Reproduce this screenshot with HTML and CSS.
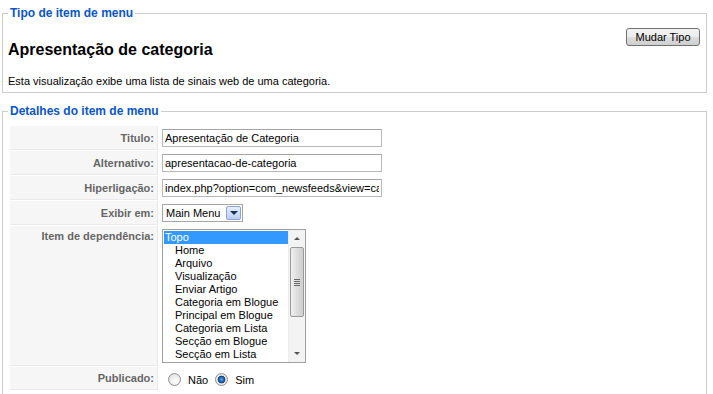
FILE: index.html
```html
<!DOCTYPE html>
<html>

<head>
    <title>Editar item de menu</title>
    <link rel="stylesheet" href="styles.css">
</head>

<body>
    <!-- tipo do item -->
    <fieldset class="box">
        <legend>Tipo de item de menu</legend>
        <button class="btn" type="button">Mudar Tipo</button>
        <h2 class="type-title">Apresentação de categoria</h2>
        <p class="type-desc">Esta visualização exibe uma lista de sinais web de uma categoria.</p>
    </fieldset>

    <!-- detalhes -->
    <fieldset class="box details">
        <legend>Detalhes do item de menu</legend>
        <table class="admintable">
            <tr>
                <td class="key">Titulo:</td>
                <td><input class="field" type="text" value="Apresentação de Categoria"></td>
            </tr>
            <tr>
                <td class="key">Alternativo:</td>
                <td><input class="field" type="text" value="apresentacao-de-categoria"></td>
            </tr>
            <tr>
                <td class="key">Hiperligação:</td>
                <td><input class="field" type="text" value="index.php?option=com_newsfeeds&amp;view=category"></td>
            </tr>
            <tr>
                <td class="key">Exibir em:</td>
                <td>
                    <div class="combo">
                        <span class="combo-text">Main Menu</span>
                        <span class="combo-btn"><span class="tri-down"></span></span>
                    </div>
                </td>
            </tr>
            <tr>
                <td class="key top">Item de dependência:</td>
                <td>
                    <div class="listbox">
                        <ul class="list-items">
                            <li class="selected">Topo</li>
                            <li class="sub">Home</li>
                            <li class="sub">Arquivo</li>
                            <li class="sub">Visualização</li>
                            <li class="sub">Enviar Artigo</li>
                            <li class="sub">Categoria em Blogue</li>
                            <li class="sub">Principal em Blogue</li>
                            <li class="sub">Categoria em Lista</li>
                            <li class="sub">Secção em Blogue</li>
                            <li class="sub">Secção em Lista</li>
                        </ul>
                        <div class="scrollbar">
                            <span class="arrow"><span class="tri-up"></span></span>
                            <span class="thumb"><span class="grip"></span></span>
                            <span class="track"></span>
                            <span class="arrow"><span class="tri-down small"></span></span>
                        </div>
                    </div>
                </td>
            </tr>
            <tr>
                <td class="key">Publicado:</td>
                <td>
                    <div class="radios">
                        <label class="radio"><span class="dot"></span>Não</label>
                        <label class="radio"><span class="dot checked"></span>Sim</label>
                    </div>
                </td>
            </tr>
        </table>
    </fieldset>
</body>

</html>
```

FILE: styles.css
```css
body {
    margin: 0;
    padding: 6px 6px 0 2px;
    font-family: "Liberation Sans", Arial, sans-serif;
    font-size: 11px;
    color: #000;
    background-color: #ffffff;
}

/* caixas */
.box {
    margin: 0;
    padding: 0 6px 4px 5px;
    border: 1px solid #cccccc;
    min-width: 0;
}

.box legend {
    padding: 0 2px;
    font-size: 12px;
    line-height: 14px;
    font-weight: bold;
    color: #0b55c4;
}

.details {
    margin-top: 11px;
    padding: 0 6px 10px 6px;
}

.details legend {
    margin-left: -1px;
}

.btn {
    float: right;
    margin-top: 8px;
    width: 74px;
    height: 18px;
    padding: 0;
    font-family: "Liberation Sans", Arial, sans-serif;
    font-size: 11px;
    color: #000;
    border: 1px solid #707070;
    border-radius: 3px;
    background: linear-gradient(#f4f4f4 0%, #ebebeb 50%, #dddddd 51%, #cfcfcf 100%);
}

.type-title {
    margin: 20px 0 0 0;
    font-size: 16px;
    line-height: 19px;
    font-weight: bold;
}

.type-desc {
    margin: 15px 0 0 0;
    font-size: 11px;
    line-height: 14px;
}

/* tabela */
.admintable {
    margin-top: 7px;
    border-collapse: separate;
    border-spacing: 1px;
}

.admintable td {
    padding: 3px;
    vertical-align: middle;
}

.admintable td.key {
    width: 141px;
    text-align: right;
    font-weight: bold;
    color: #666666;
    background-color: #f6f6f6;
    border-right: 1px solid #e9e9e9;
    border-bottom: 1px solid #e9e9e9;
}

.admintable td.key.top {
    vertical-align: top;
    padding-top: 4px;
}

.field {
    box-sizing: border-box;
    width: 220px;
    height: 18px;
    margin: 0;
    padding: 0 2px;
    font-family: "Liberation Sans", Arial, sans-serif;
    font-size: 11px;
    color: #000;
    border: 1px solid #b8b8b8;
    border-top-color: #a5a5a5;
    display: block;
}

/* combo */
.combo {
    box-sizing: border-box;
    display: flex;
    align-items: center;
    width: 81px;
    height: 18px;
    border: 1px solid #a5a5a5;
    background: #fff;
}

.combo-text {
    flex: 1;
    padding-left: 3px;
    line-height: 14px;
}

.combo-btn {
    box-sizing: border-box;
    width: 15px;
    height: 14px;
    margin-right: 1px;
    display: flex;
    align-items: center;
    justify-content: center;
    border: 1px solid #8aa4cf;
    border-radius: 2px;
    background: linear-gradient(#e6eefc, #b9cdf4);
}

.tri-down {
    width: 0;
    height: 0;
    border-left: 4px solid transparent;
    border-right: 4px solid transparent;
    border-top: 4px solid #1c2f58;
}

.tri-up {
    width: 0;
    height: 0;
    border-left: 3px solid transparent;
    border-right: 3px solid transparent;
    border-bottom: 3px solid #555;
}

.tri-down.small {
    border-left-width: 3px;
    border-right-width: 3px;
    border-top: 3px solid #555;
}

/* lista */
.listbox {
    box-sizing: border-box;
    display: flex;
    width: 144px;
    height: 134px;
    border: 1px solid #a0a0a0;
    background: #fff;
}

.list-items {
    flex: 1;
    margin: 0;
    padding: 1px 0 0 1px;
    list-style: none;
    font-size: 11px;
    line-height: 13px;
}

.list-items li {
    padding-left: 1px;
    white-space: nowrap;
}

.list-items li.sub {
    padding-left: 11px;
}

.list-items li.selected {
    background-color: #3399ff;
    color: #ffffff;
}

.scrollbar {
    width: 16px;
    display: flex;
    flex-direction: column;
    background: #f3f3f3;
    border-left: 1px solid #ececec;
}

.scrollbar .arrow {
    height: 17px;
    display: flex;
    align-items: center;
    justify-content: center;
}

.scrollbar .thumb {
    box-sizing: border-box;
    height: 70px;
    margin: 0 1px;
    display: flex;
    align-items: center;
    justify-content: center;
    border: 1px solid #9a9a9a;
    border-radius: 2px;
    background: linear-gradient(to right, #f0f0f0, #dcdcdc 55%, #cfcfcf);
}

.scrollbar .grip {
    width: 6px;
    height: 7px;
    background: repeating-linear-gradient(#6a6a6a 0 1px, transparent 1px 2px);
}

.scrollbar .track {
    flex: 1;
}

/* radios */
.radios {
    display: flex;
    align-items: center;
    gap: 7px;
    padding: 3px 0 1px 6px;
}

.radio {
    display: flex;
    align-items: center;
    gap: 7px;
    font-size: 11px;
}

.dot {
    box-sizing: border-box;
    width: 13px;
    height: 13px;
    border-radius: 50%;
    border: 1px solid #8e8f8f;
    background: radial-gradient(circle at 60% 65%, #ffffff 0%, #e6e6e6 70%, #cfcfcf 100%);
}

.dot.checked {
    background: radial-gradient(circle at 50% 50%, #5fa8e8 0, #1f5fa8 2.5px, #123e73 3.5px, #e6e6e6 4.2px, #f4f4f4 100%);
}
```
